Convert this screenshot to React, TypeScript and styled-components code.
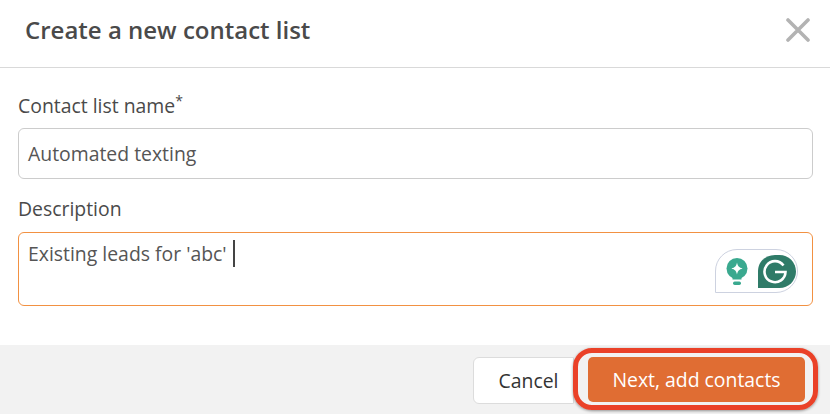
import styled, { createGlobalStyle } from "styled-components";

const GlobalStyle = createGlobalStyle`
  html, body {
    margin: 0;
    padding: 0;
    background: #fff;
  }
  * {
    box-sizing: border-box;
  }
`;

function GrammarlyBadge() {
  return (
    <Badge>
      <svg width="22" height="27" viewBox="0 0 22 27">
        <circle cx="11" cy="10.500" r="10.500" fill="#3aa98f" />
        <path d="M6.500 17h9v4.500h-9z" fill="#3aa98f" />
        <rect x="7" y="23.500" width="8" height="3.500" rx="1.700" fill="#3aa98f" />
        <path d="M11 4.500c.7 3.600 2 5 5.600 6-3.600 1-4.900 2.400-5.600 6-.7-3.600-2-5-5.600-6 3.600-1 4.900-2.400 5.600-6z" fill="#fff" />
      </svg>
      <svg width="38" height="33" viewBox="0 0 38 33">
        <path d="M0 16.500C0 7 7 0 17 0h4.500a16.500 16.500 0 0 1 0 33H0z" fill="#2f7b68" />
        <path d="M25.500 10.500a10.500 10.500 0 1 0 2 6.500H17" fill="none" stroke="#fff" strokeWidth="2.600" />
      </svg>
    </Badge>
  );
}

export default function App() {
  return (
    <>
      <GlobalStyle />
      <Modal>
        <Header>
          <Title>Create a new contact list</Title>
          <CloseButton aria-label="Close">
            <svg width="24" height="24" viewBox="0 0 24 24">
              <path d="M2 2l20 20M22 2L2 22" stroke="#b3b3b3" strokeWidth="3.600" strokeLinecap="round" />
            </svg>
          </CloseButton>
        </Header>
        <Body>
          <Field>
            <Label>
              Contact list name<Star>*</Star>
            </Label>
            <TextInput>Automated texting</TextInput>
          </Field>
          <Field>
            <Label>Description</Label>
            <TextArea>
              Existing leads for 'abc'
              <Caret />
              <GrammarlyBadge />
            </TextArea>
          </Field>
        </Body>
        <Footer>
          <CancelButton>Cancel</CancelButton>
          <PrimaryWrap>
            <PrimaryButton>Next, add contacts</PrimaryButton>
          </PrimaryWrap>
        </Footer>
      </Modal>
    </>
  );
}

const Modal = styled.div`
  width: 830px;
  height: 414px;
  display: flex;
  flex-direction: column;
  overflow: hidden;
  background: #fff;
  font-family: "Open Sans", "Liberation Sans", sans-serif;
  color: #4a4a4a;
`;

const Header = styled.header`
  height: 68px;
  flex: none;
  display: flex;
  align-items: center;
  justify-content: space-between;
  padding: 0 20px 7px 25px;
  border-bottom: 1px solid #d9d9d9;
`;

const Title = styled.h1`
  margin: 0;
  font-size: 24px;
  font-weight: 600;
  line-height: 32px;
  color: #4a4a4a;
`;

const CloseButton = styled.button`
  width: 24px;
  height: 24px;
  padding: 0;
  border: 0;
  background: none;
  display: flex;
`;

const Body = styled.main`
  flex: 1;
  padding: 25px 17px 0 18px;
  display: flex;
  flex-direction: column;
  gap: 17px;
`;

const Field = styled.div`
  display: flex;
  flex-direction: column;
`;

const Label = styled.label`
  font-size: 19.400px;
  line-height: 26px;
  height: 35px;
  color: #4a4a4a;
`;

const Star = styled.sup`
  font-size: 14px;
  line-height: 0;
`;

const TextInput = styled.div`
  height: 51px;
  padding: 0 9px;
  display: flex;
  align-items: center;
  font-size: 19.400px;
  color: #555;
  border: 1px solid #ccc;
  border-radius: 6px;
`;

const TextArea = styled.div`
  position: relative;
  height: 74px;
  margin-top: 1px;
  padding: 7px 9px;
  font-size: 19.400px;
  line-height: 28px;
  color: #555;
  border: 1px solid #f29142;
  border-radius: 6px;
`;

const Caret = styled.span`
  display: inline-block;
  width: 2px;
  height: 27px;
  margin-left: 6px;
  vertical-align: -6px;
  background: #444;
`;

const Badge = styled.div`
  position: absolute;
  right: 14px;
  top: 16px;
  width: 83px;
  height: 44px;
  display: flex;
  align-items: center;
  gap: 10px;
  padding: 0 0 0 10px;
  background: #fff;
  border: 1.500px solid #cdd2e0;
  border-radius: 22px 22px 22px 0;
`;

const Footer = styled.footer`
  height: 69px;
  flex: none;
  background: #f2f2f2;
  display: flex;
  align-items: center;
  justify-content: flex-end;
  padding: 0 25px 0 0;
  gap: 14px;
`;

const CancelButton = styled.button`
  width: 101px;
  height: 47px;
  margin-top: 1px;
  padding: 0 0 0 10px;
  background: #fff;
  border: 1px solid #dcdcdc;
  border-radius: 6px 0 0 6px;
  font: 400 19.400px "Open Sans", "Liberation Sans", sans-serif;
  color: #333;
`;

const PrimaryWrap = styled.div`
  position: relative;
  display: flex;
  &::after {
    content: "";
    position: absolute;
    inset: -9px -13px -8px -15px;
    border: 5px solid #ea4128;
    border-radius: 19px;
    box-shadow: 0 1px 3px rgba(0, 0, 0, 0.4);
    pointer-events: none;
  }
`;

const PrimaryButton = styled.button`
  width: 217px;
  height: 45px;
  background: #e06d33;
  border: 0;
  border-radius: 5px;
  font: 500 19.400px "Open Sans", "Liberation Sans", sans-serif;
  color: #fff;
`;
